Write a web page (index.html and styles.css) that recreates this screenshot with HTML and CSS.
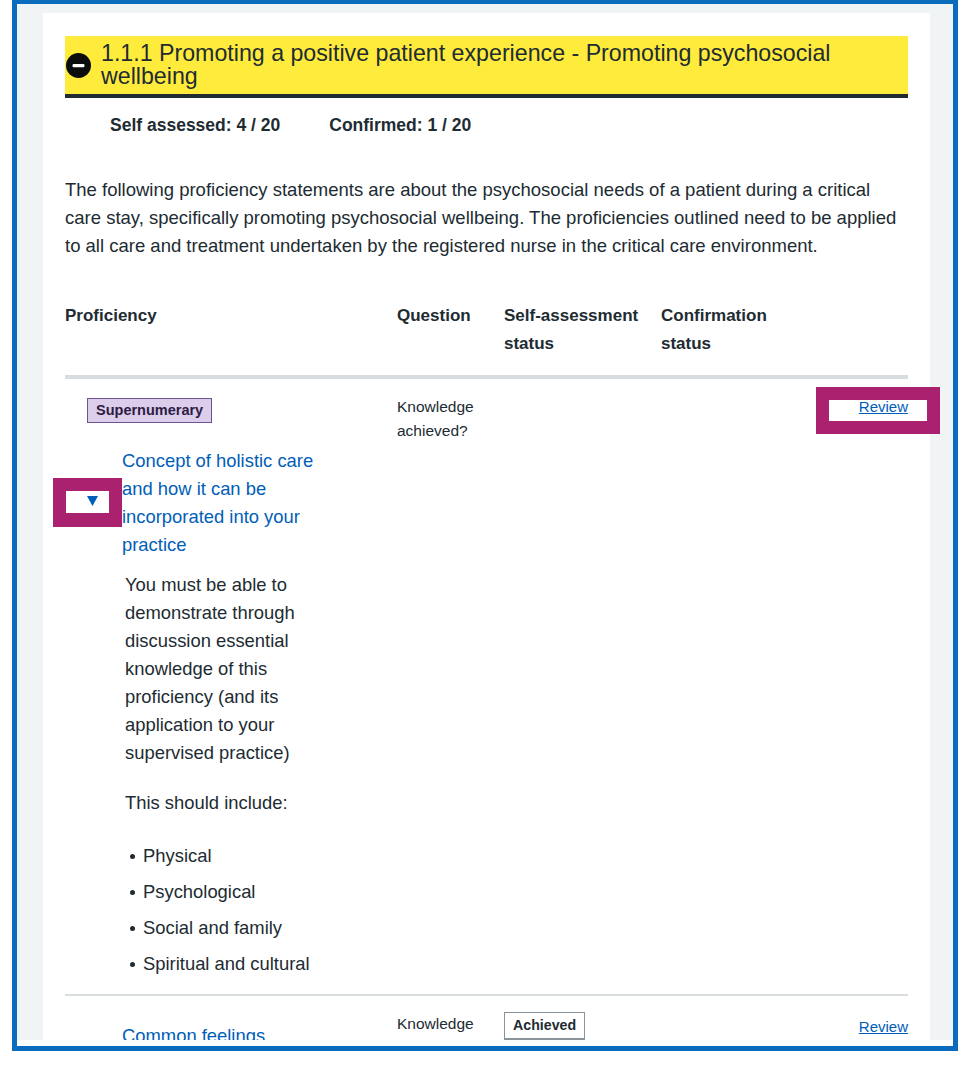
FILE: index.html
```html
<!DOCTYPE html>
<html lang="en">
<head>
<meta charset="utf-8">
<title>Promoting psychosocial wellbeing</title>
<link rel="stylesheet" href="styles.css">
</head>
<body>
<div class="frame">
  <div class="viewport">
    <div class="card">
      <h2 class="section-heading">
        <span class="minus-icon"><svg width="25" height="25" viewBox="0 0 25 25"><circle cx="12.5" cy="12.5" r="12.5" fill="#0b0c0c"/><rect x="6.5" y="11" width="12" height="3.2" rx="1.2" fill="#fff"/></svg></span>
        <span class="heading-text">1.1.1 Promoting a positive patient experience - Promoting psychosocial wellbeing</span>
      </h2>
      <div class="stats">
        <span>Self assessed: 4 / 20</span>
        <span>Confirmed: 1 / 20</span>
      </div>
      <p class="intro">The following proficiency statements are about the psychosocial needs of a patient during a critical care stay, specifically promoting psychosocial wellbeing. The proficiencies outlined need to be applied to all care and treatment undertaken by the registered nurse in the critical care environment.</p>
      <div class="table">
        <div class="row head">
          <div class="th">Proficiency</div>
          <div class="th">Question</div>
          <div class="th">Self-assessment status</div>
          <div class="th">Confirmation status</div>
          <div class="th"></div>
        </div>
        <div class="row">
          <div class="cell prof">
            <span class="tag tag-purple">Supernumerary</span>
            <div class="summary">
              <span class="marker"><svg width="11" height="10" viewBox="0 0 11 10"><polygon points="0,0 11,0 5.5,10" fill="#005eb8"/></svg></span>
              <a class="prof-link" href="#">Concept of holistic care and how it can be incorporated into your practice</a>
            </div>
            <div class="details-body">
              <p>You must be able to demonstrate through discussion essential knowledge of this proficiency (and its application to your supervised practice)</p>
              <p class="include">This should include:</p>
              <ul>
                <li>Physical</li>
                <li>Psychological</li>
                <li>Social and family</li>
                <li>Spiritual and cultural</li>
              </ul>
            </div>
          </div>
          <div class="cell question">Knowledge achieved?</div>
          <div class="cell"></div>
          <div class="cell"></div>
          <div class="cell action"><a href="#">Review</a></div>
        </div>
        <div class="row">
          <div class="cell prof">
            <div class="summary first">
              <span class="marker"><svg width="11" height="10" viewBox="0 0 11 10"><polygon points="0,0 11,0 5.5,10" fill="#005eb8"/></svg></span>
              <a class="prof-link" href="#">Common feelings experienced by patients in critical care</a>
            </div>
          </div>
          <div class="cell question">Knowledge achieved?</div>
          <div class="cell"><span class="tag tag-white">Achieved</span></div>
          <div class="cell"></div>
          <div class="cell action second"><a href="#">Review</a></div>
        </div>
      </div>
    </div>
  </div>
</div>
<div class="annot annot-review"></div>
<div class="annot annot-marker"></div>
</body>
</html>
```

FILE: styles.css
```css
body {
  margin: 0;
  background: #ffffff;
  font-family: "Liberation Sans", Arial, sans-serif;
  color: #212b32;
}

.frame {
  margin-left: 12px;
  width: 936px;
  height: 1042px;
  border: 5px solid #0b6cbd;
  border-top-width: 4px;
  background: #ffffff;
}

.viewport {
  height: 1036px;
  box-sizing: border-box;
  padding: 9px 23px 0 26px;
  background: #f0f4f5;
  overflow: hidden;
}

.card {
  background: #ffffff;
  padding: 23px 22px 60px;
}

.section-heading {
  margin: 0;
  display: flex;
  align-items: center;
  gap: 10px;
  padding: 6px 20px 6px 1px;
  background: #ffeb3b;
  border-bottom: 4px solid #212b32;
  font-weight: normal;
  font-size: 23.2px;
  line-height: 23px;
  color: #212b32;
}

.minus-icon {
  display: flex;
  flex: none;
  width: 25px;
  height: 25px;
}

.stats {
  display: flex;
  gap: 49px;
  margin-top: 13px;
  padding-left: 45px;
  font-weight: bold;
  font-size: 17.5px;
  line-height: 28px;
}

.intro {
  margin: 37px 0 0;
  font-size: 18.5px;
  line-height: 28px;
}

.table {
  margin-top: 42px;
}

.row {
  display: grid;
  grid-template-columns: 332px 107px 157px 140px 1fr;
  border-bottom: 2px solid #d8dde0;
}

.row.head {
  border-bottom: 4px solid #d8dde0;
}

.th {
  font-weight: bold;
  font-size: 17px;
  line-height: 28px;
  padding-bottom: 17px;
}

.cell {
  padding-top: 16px;
  padding-bottom: 16px;
}

.question {
  font-size: 15.5px;
  line-height: 24px;
}

.action {
  text-align: right;
  font-size: 15px;
  line-height: 24px;
}

.action.second {
  padding-top: 19px;
}

.action a {
  color: #005eb8;
  text-decoration: underline;
}

.tag {
  display: inline-block;
  font-weight: bold;
  line-height: 17px;
  padding: 3px 8px;
}

.tag-purple {
  margin: 3px 0 0 22px;
  font-size: 14.5px;
  background: #dccdea;
  border: 1px solid #6d5591;
  color: #2c1c44;
}

.tag-white {
  font-size: 14.2px;
  background: #ffffff;
  border: 1px solid #8a9399;
  border-bottom-width: 2px;
  color: #212b32;
  padding: 4px 8px;
}

.summary {
  display: flex;
  align-items: center;
  margin-top: 24px;
  padding-left: 22px;
}

.summary.first {
  margin-top: 10px;
}

.marker {
  display: flex;
  flex: none;
  width: 11px;
  margin-right: 24px;
  position: relative;
  top: -2px;
}

.prof-link {
  width: 214px;
  color: #005eb8;
  text-decoration: none;
  font-size: 18.4px;
  line-height: 28px;
}

.details-body {
  margin-top: 12px;
  padding-left: 60px;
  width: 212px;
  font-size: 18.4px;
  line-height: 28px;
}

.details-body p {
  margin: 0;
}

.details-body p.include {
  margin-top: 22px;
}

.details-body ul {
  margin: 25px 0 0;
  padding-left: 18px;
  list-style: none;
}

.details-body li {
  position: relative;
  margin-top: 8px;
}

.details-body li:first-child {
  margin-top: 0;
}

.details-body li::before {
  content: "";
  position: absolute;
  left: -13px;
  top: 12px;
  width: 5px;
  height: 5px;
  border-radius: 50%;
  background: #212b32;
}

.annot {
  position: absolute;
  box-sizing: border-box;
  border: 13px solid #a9216f;
  background: transparent;
}

.annot-review {
  left: 816px;
  top: 387px;
  width: 124px;
  height: 47px;
}

.annot-marker {
  left: 53px;
  top: 478px;
  width: 69px;
  height: 49px;
  border-bottom-width: 14px;
}
```
